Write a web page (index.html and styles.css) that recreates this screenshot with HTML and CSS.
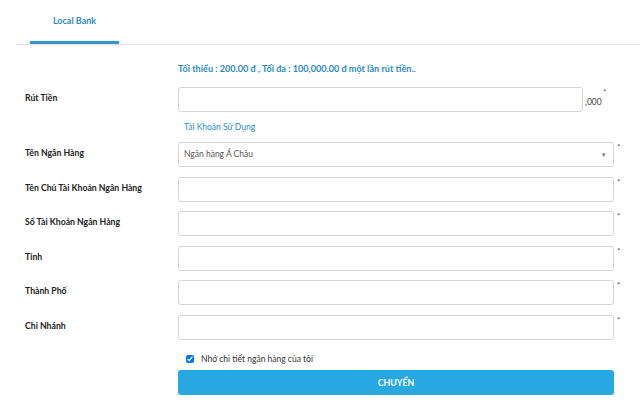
FILE: index.html
```html
<!DOCTYPE html>
<html lang="vi">

<head>
  <meta charset="UTF-8">
  <meta name="viewport" content="width=device-width, initial-scale=1.0">
  <title>rút tiền</title>
  <link rel="stylesheet" href="styles.css">
</head>

<body>
  <div class="tabs">
    <a class="tab active" href="#">Local Bank</a>
  </div>

  <form class="withdraw-form">
    <p class="limits">Tối thiểu : 200.00 đ , Tối đa : 100,000.00 đ một lần rút tiền..</p>

    <div class="row">
      <label>Rút Tiền</label>
      <div class="field amount">
        <input type="text">
        <span class="suffix">,000</span>
      </div>
      <span class="req">*</span>
    </div>

    <p class="account-link">Tài Khoản Sử Dụng</p>

    <div class="row">
      <label>Tên Ngân Hàng</label>
      <div class="field select">
        <span>Ngân hàng Á Châu</span>
        <span class="caret">&#9662;</span>
      </div>
      <span class="req">*</span>
    </div>

    <div class="row">
      <label>Tên Chủ Tài Khoản Ngân Hàng</label>
      <div class="field"><input type="text"></div>
      <span class="req">*</span>
    </div>

    <div class="row">
      <label>Số Tài Khoản Ngân Hàng</label>
      <div class="field"><input type="text"></div>
      <span class="req">*</span>
    </div>

    <div class="row">
      <label>Tỉnh</label>
      <div class="field"><input type="text"></div>
      <span class="req">*</span>
    </div>

    <div class="row">
      <label>Thành Phố</label>
      <div class="field"><input type="text"></div>
      <span class="req">*</span>
    </div>

    <div class="row">
      <label>Chi Nhánh</label>
      <div class="field"><input type="text"></div>
      <span class="req">*</span>
    </div>

    <div class="remember">
      <input type="checkbox" checked>
      <span>Nhớ chi tiết ngân hàng của tôi</span>
    </div>

    <button type="button" class="submit">CHUYỂN</button>
  </form>
</body>

</html>
```

FILE: styles.css
```css
body {
  font-family: Lato, 'Open Sans', sans-serif;
  margin: 0;
  padding: 0;
  background-color: #FFFFFF;
  color: #222222;
}

.tabs {
  margin-left: 16px;
  height: 44px;
  border-bottom: 1px solid #E2E2E2;
  display: flex;
  padding-left: 14px;
}

.tab {
  width: 89px;
  height: 41px;
  display: flex;
  align-items: center;
  justify-content: center;
  padding-bottom: 4px;
  box-sizing: border-box;
  font-size: 9px;
  font-weight: bold;
  color: #2A8CC4;
  text-decoration: none;
}

.tab.active {
  height: 44px;
  border-bottom: 3px solid #3596C8;
  padding-bottom: 1px;
}

.withdraw-form {
  padding-left: 178px;
}

.limits {
  margin: 0;
  padding-top: 18px;
  height: 24px;
  font-size: 9.1px;
  font-weight: bold;
  color: #2A8CC4;
}

.row {
  display: flex;
  align-items: flex-start;
  margin-left: -153px;
  margin-bottom: 9.6px;
}

.row label {
  width: 153px;
  padding-top: 5px;
  font-size: 8.7px;
  font-weight: bold;
  color: #222222;
}

.field {
  width: 436px;
  height: 25px;
  display: flex;
  align-items: center;
}

.field input {
  width: 100%;
  height: 25px;
  box-sizing: border-box;
  border: 1px solid #D4D4D4;
  border-radius: 3px;
  background: #FFFFFF;
  margin: 0;
}

.amount input {
  width: 405px;
  flex: none;
}

.suffix {
  font-size: 8.5px;
  color: #444444;
  margin-left: 2px;
  padding-top: 5px;
}

.select {
  box-sizing: border-box;
  border: 1px solid #D4D4D4;
  border-radius: 3px;
  padding: 0 7px 0 5px;
  justify-content: space-between;
  font-size: 8.5px;
  color: #555555;
}

.caret {
  font-size: 7px;
  color: #777777;
}

.req {
  font-size: 8px;
  color: #555555;
  margin-left: 3px;
  line-height: 10px;
}

.amount + .req {
  margin-left: -11px;
}

.account-link {
  margin: 0 0 0 6px;
  height: 20.4px;
  font-size: 8.5px;
  color: #2A8CC4;
}

.remember {
  display: flex;
  align-items: center;
  gap: 7px;
  height: 18px;
  margin-top: 4px;
  padding-left: 8px;
  font-size: 8.5px;
  color: #333333;
}

.remember input {
  width: 8px;
  height: 8px;
  margin: 0;
}

.submit {
  display: block;
  margin-top: 2px;
  width: 436px;
  height: 25px;
  border: none;
  border-radius: 3px;
  background-color: #28A8E0;
  color: #FFFFFF;
  font-family: Lato, 'Open Sans', sans-serif;
  font-size: 8.8px;
  font-weight: bold;
}
```
